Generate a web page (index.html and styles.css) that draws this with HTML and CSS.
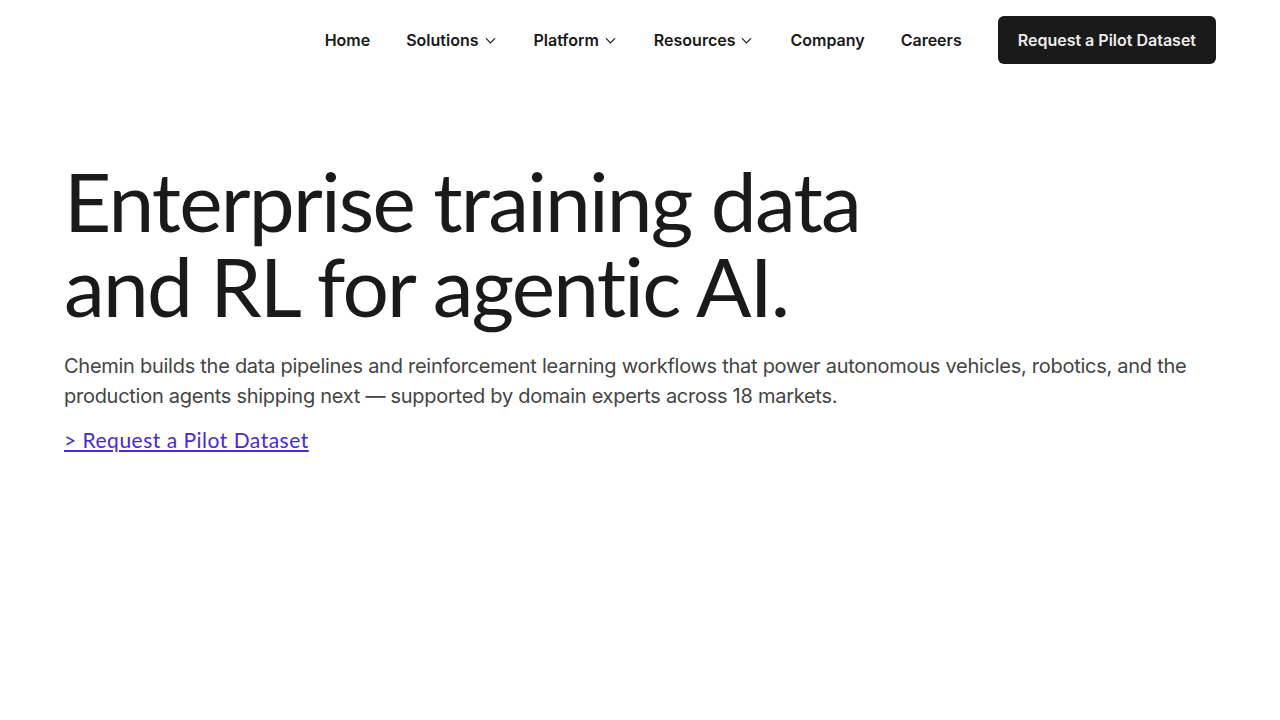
FILE: index.html
```html
<!DOCTYPE html>
<html lang="en">
<head>
    <meta charset="UTF-8">
    <meta name="viewport" content="width=device-width, initial-scale=1.0">
    <title>Chemin</title>
    <link rel="stylesheet" href="styles.css">
</head>
<body>

    <header class="site-header">
        <nav class="nav">
            <a href="#" class="nav-link">Home</a>
            <a href="#" class="nav-link">Solutions
                <svg class="chevron" viewBox="0 0 16 16"><path d="M3.5 6l4.5 4.5L12.5 6"/></svg>
            </a>
            <a href="#" class="nav-link">Platform
                <svg class="chevron" viewBox="0 0 16 16"><path d="M3.5 6l4.5 4.5L12.5 6"/></svg>
            </a>
            <a href="#" class="nav-link">Resources
                <svg class="chevron" viewBox="0 0 16 16"><path d="M3.5 6l4.5 4.5L12.5 6"/></svg>
            </a>
            <a href="#" class="nav-link">Company</a>
            <a href="#" class="nav-link">Careers</a>
            <a href="#" class="nav-button">Request a Pilot Dataset</a>
        </nav>
    </header>

    <main class="hero">
        <h1 class="hero-title">Enterprise training data<br>and RL for agentic AI.</h1>
        <p class="hero-text">Chemin builds the data pipelines and reinforcement learning workflows that power autonomous vehicles, robotics, and the production agents shipping next — supported by domain experts across 18 markets.</p>
        <a href="#" class="hero-link">&gt; Request a Pilot Dataset</a>
    </main>

</body>
</html>
```

FILE: styles.css
```css
body {
    font-family: Inter, 'Liberation Sans', sans-serif;
    background-color: #fff;
    color: #1a1a1a;
    margin: 0;
}

.site-header {
    padding: 16px 64px;
}

.nav {
    display: flex;
    justify-content: flex-end;
    align-items: center;
    gap: 36px;
}

.nav-link {
    display: flex;
    align-items: center;
    gap: 4px;
    color: #1a1a1a;
    font-size: 16px;
    font-weight: 600;
    text-decoration: none;
}

.chevron {
    width: 15px;
    height: 15px;
    fill: none;
    stroke: #1a1a1a;
    stroke-width: 1.3;
    stroke-linecap: round;
    stroke-linejoin: round;
}

.nav-button {
    background-color: #1a1a1a;
    color: #ececec;
    font-size: 16px;
    font-weight: 600;
    text-decoration: none;
    padding: 0 20px;
    height: 48px;
    display: flex;
    align-items: center;
    border-radius: 6px;
}


.hero {
    padding: 78px 64px 0;
}

.hero-title {
    font-family: Lato, 'Noto Sans', sans-serif;
    font-weight: 400;
    font-size: 82px;
    line-height: 85px;
    letter-spacing: -1.8px;
    margin: 0 0 23px;
    color: #1a1a1a;
}

.hero-text {
    font-size: 20px;
    line-height: 30px;
    letter-spacing: -0.27px;
    color: #444;
    margin: 0 0 16px;
}

.hero-link {
    font-family: Lato, 'Noto Sans', sans-serif;
    font-size: 21px;
    letter-spacing: 0.5px;
    color: #4a2ad4;
    text-decoration: underline;
}
```
